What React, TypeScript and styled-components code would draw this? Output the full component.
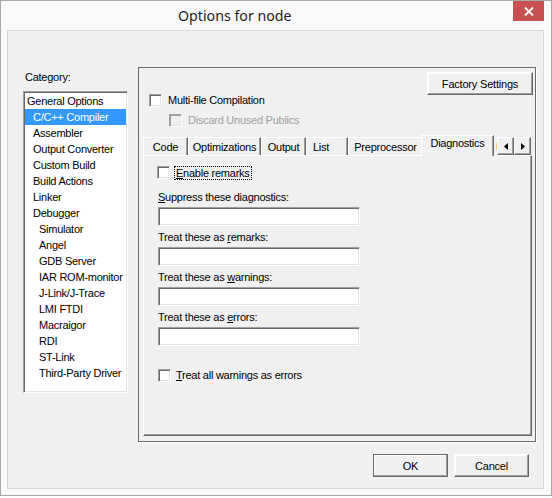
import React from 'react';
import styled, { createGlobalStyle } from 'styled-components';

const GlobalStyle = createGlobalStyle`
  html, body {
    margin: 0;
    padding: 0;
    background: #ffffff;
  }
  body {
    font-family: "Liberation Sans", Arial, sans-serif;
    font-size: 11px;
    letter-spacing: -0.25px;
    color: #000;
  }
`;

const Window = styled.div`
  width: 552px;
  height: 496px;
  box-sizing: border-box;
  border: 1px solid #a9a9a9;
  background: #f9f9f9;
  display: flex;
  flex-direction: column;
`;

const TitleBar = styled.div`
  height: 29px;
  display: flex;
  align-items: flex-start;
  flex-shrink: 0;
`;

const Title = styled.div`
  font-family: "Noto Sans", "Open Sans", sans-serif;
  font-size: 14.2px;
  letter-spacing: 0;
  color: #1e1e1e;
  line-height: 30px;
  padding-left: 177px;
`;

const CloseButton = styled.div`
  margin-left: auto;
  margin-right: 7px;
  width: 31px;
  height: 20px;
  background: #c75050;
  display: flex;
  align-items: center;
  justify-content: center;
`;

const Client = styled.div`
  flex: 1;
  margin: 0 7px 6px 6px;
  border: 1px solid #d6d6d6;
  background: #f0f0f0;
  display: flex;
  flex-direction: column;
`;

const MainRow = styled.div`
  display: flex;
  padding: 36px 0 0 15px;
`;

const LeftColumn = styled.div`
  width: 105px;
  display: flex;
  flex-direction: column;
`;

const CategoryLabel = styled.div`
  margin: 4px 0 7px 2px;
  line-height: 13px;
`;

const ListBox = styled.div`
  width: 105px;
  height: 302px;
  box-sizing: border-box;
  background: #fff;
  border: 1px solid;
  border-color: #a0a0a0 #fff #fff #a0a0a0;
  box-shadow: inset 1px 1px 0 #696969, inset -1px -1px 0 #e3e3e3;
  padding: 1px 1px;
`;

const ListItem = styled.div<{ $level: number; $selected?: boolean }>`
  height: 16px;
  line-height: 16px;
  padding-left: ${p => 2 + p.$level * 6}px;
  white-space: nowrap;
  background: ${p => (p.$selected ? '#3399ff' : 'transparent')};
  color: ${p => (p.$selected ? '#fff' : '#000')};
`;

const Frame = styled.div`
  margin-left: 10px;
  width: 398px;
  height: 375px;
  box-sizing: border-box;
  border: 1px solid #6b6b6b;
  box-shadow: 1px 1px 0 #ffffff;
  display: flex;
  flex-direction: column;
`;

const PushButton = styled.button<{ $w: number; $default?: boolean }>`
  width: ${p => p.$w}px;
  height: 23px;
  box-sizing: border-box;
  padding: 0;
  margin: 0;
  font-family: "Liberation Sans", Arial, sans-serif;
  font-size: 11px;
  letter-spacing: -0.2px;
  color: #000;
  background: #f0f0f0;
  border: 1px solid;
  border-color: ${p => (p.$default ? '#696969' : '#fff #696969 #696969 #fff')};
  box-shadow: inset -1px -1px 0 #a0a0a0, inset 1px 1px 0 #ffffff;
`;

const FactoryButton = styled(PushButton)`
  align-self: flex-end;
  margin: 4px 2px 0 0;
`;

const CheckRow = styled.label<{ $indent: number; $top: number; $gap: number; $disabled?: boolean }>`
  display: flex;
  align-items: center;
  height: 13px;
  margin-left: ${p => p.$indent}px;
  margin-top: ${p => p.$top}px;
  gap: ${p => p.$gap}px;
  color: ${p => (p.$disabled ? '#a0a0a0' : '#000')};
  line-height: 13px;
  white-space: nowrap;
`;

const CheckBox = styled.span<{ $disabled?: boolean }>`
  width: 13px;
  height: 13px;
  box-sizing: border-box;
  flex-shrink: 0;
  background: ${p => (p.$disabled ? '#f0f0f0' : '#fff')};
  border: 1px solid;
  border-color: #a0a0a0 #fff #fff #a0a0a0;
  box-shadow: ${p =>
    p.$disabled
      ? 'inset 1px 1px 0 #a0a0a0, inset -1px -1px 0 #e3e3e3'
      : 'inset 1px 1px 0 #696969, inset -1px -1px 0 #e3e3e3'};
`;

const FocusText = styled.span`
  border: 1px dotted #000;
  padding: 0 1px;
  line-height: 12px;
`;

const U = styled.span`
  text-decoration: underline;
`;

const TabStrip = styled.div`
  display: flex;
  align-items: flex-end;
  height: 20px;
  margin: 8px 0 0 4px;
  position: relative;
  z-index: 1;
`;

const Tab = styled.div<{ $w: number; $selected?: boolean; $indent?: number }>`
  width: ${p => p.$w}px;
  flex-shrink: 0;
  box-sizing: border-box;
  height: ${p => (p.$selected ? 21 : 18)}px;
  margin: ${p => (p.$selected ? '0 -2px -1px -2px' : '0')};
  position: relative;
  z-index: ${p => (p.$selected ? 2 : 1)};
  background: #f0f0f0;
  border-top: 1px solid #fff;
  border-left: 1px solid #fff;
  border-right: 1px solid #696969;
  box-shadow: inset -1px 0 0 #a0a0a0;
  line-height: ${p => (p.$selected ? 15 : 18)}px;
  text-align: ${p => (p.$indent !== undefined ? 'left' : 'center')};
  padding-left: ${p => p.$indent ?? 0}px;
  white-space: nowrap;
  overflow: hidden;
`;

const TabSliver = styled.div`
  width: 5px;
  height: 18px;
  flex-shrink: 0;
  box-sizing: border-box;
  border-top: 1px solid #fff;
  border-left: 1px solid #fff;
  display: flex;
  align-items: center;
  justify-content: flex-end;
  span {
    width: 1px;
    height: 7px;
    background: #f2c96e;
  }
`;

const ArrowButton = styled.div`
  width: 17px;
  height: 18px;
  flex-shrink: 0;
  box-sizing: border-box;
  background: #f0f0f0;
  border: 1px solid;
  border-color: #fff #696969 #696969 #fff;
  box-shadow: inset -1px -1px 0 #a0a0a0;
  display: flex;
  align-items: center;
  justify-content: center;
`;

const TabPage = styled.div`
  flex: 1;
  margin: 0 3px 5px 4px;
  box-sizing: border-box;
  border-top: 1px solid #fff;
  border-left: 1px solid #fff;
  border-right: 1px solid #696969;
  border-bottom: 1px solid #696969;
  box-shadow: inset -1px -1px 0 #a0a0a0;
  padding: 10px 0 0 14px;
  display: flex;
  flex-direction: column;
`;

const FieldGroup = styled.div`
  display: flex;
  flex-direction: column;
  height: 40px;
`;

const FieldLabel = styled.div`
  height: 14px;
  line-height: 14px;
  margin-bottom: 3px;
`;

const TextInput = styled.div`
  width: 202px;
  height: 19px;
  box-sizing: border-box;
  background: #fff;
  border: 1px solid;
  border-color: #a0a0a0 #fff #fff #a0a0a0;
  box-shadow: inset 1px 1px 0 #696969, inset -1px -1px 0 #e3e3e3;
`;

const Fields = styled.div`
  margin-top: 11px;
  display: flex;
  flex-direction: column;
`;

const Footer = styled.div`
  display: flex;
  justify-content: flex-end;
  gap: 6px;
  margin-top: 12px;
  padding-right: 14px;
`;

const categories: { label: string; level: number; selected?: boolean }[] = [
  { label: 'General Options', level: 0 },
  { label: 'C/C++ Compiler', level: 1, selected: true },
  { label: 'Assembler', level: 1 },
  { label: 'Output Converter', level: 1 },
  { label: 'Custom Build', level: 1 },
  { label: 'Build Actions', level: 1 },
  { label: 'Linker', level: 1 },
  { label: 'Debugger', level: 1 },
  { label: 'Simulator', level: 2 },
  { label: 'Angel', level: 2 },
  { label: 'GDB Server', level: 2 },
  { label: 'IAR ROM-monitor', level: 2 },
  { label: 'J-Link/J-Trace', level: 2 },
  { label: 'LMI FTDI', level: 2 },
  { label: 'Macraigor', level: 2 },
  { label: 'RDI', level: 2 },
  { label: 'ST-Link', level: 2 },
  { label: 'Third-Party Driver', level: 2 },
];

const tabs = [
  { label: 'Code', w: 45 },
  { label: 'Optimizations', w: 73 },
  { label: 'Output', w: 45 },
  { label: 'List', w: 42, indent: 6 },
  { label: 'Preprocessor', w: 75 },
  { label: 'Diagnostics', w: 73, selected: true },
];

const Arrow = ({ dir }: { dir: 'left' | 'right' }) => (
  <svg width="4" height="7" viewBox="0 0 4 7">
    {dir === 'left' ? (
      <path d="M4 0 L0 3.5 L4 7 Z" fill="#000" />
    ) : (
      <path d="M0 0 L4 3.5 L0 7 Z" fill="#000" />
    )}
  </svg>
);

const App: React.FC = () => {
  return (
    <>
      <GlobalStyle />
      <Window>
        <TitleBar>
          <Title>Options for node</Title>
          <CloseButton>
            <svg width="10" height="9" viewBox="0 0 10 9">
              <path d="M1 0.5 L9 8.5 M9 0.5 L1 8.5" stroke="#fff" strokeWidth="1.8" />
            </svg>
          </CloseButton>
        </TitleBar>
        <Client>
          <MainRow>
            <LeftColumn>
              <CategoryLabel>Category:</CategoryLabel>
              <ListBox>
                {categories.map(c => (
                  <ListItem key={c.label} $level={c.level} $selected={c.selected}>
                    {c.label}
                  </ListItem>
                ))}
              </ListBox>
            </LeftColumn>
            <Frame>
              <FactoryButton $w={106}>Factory Settings</FactoryButton>
              <CheckRow $indent={10} $top={-1} $gap={6}>
                <CheckBox />
                Multi-file Compilation
              </CheckRow>
              <CheckRow $indent={30} $top={7} $gap={6} $disabled>
                <CheckBox $disabled />
                Discard Unused Publics
              </CheckRow>
              <TabStrip>
                {tabs.map(t => (
                  <Tab key={t.label} $w={t.w} $selected={t.selected} $indent={t.indent}>
                    {t.label}
                  </Tab>
                ))}
                <TabSliver>
                  <span />
                </TabSliver>
                <ArrowButton>
                  <Arrow dir="left" />
                </ArrowButton>
                <ArrowButton>
                  <Arrow dir="right" />
                </ArrowButton>
              </TabStrip>
              <TabPage>
                <CheckRow $indent={-1} $top={0} $gap={4}>
                  <CheckBox />
                  <FocusText>
                    <U>E</U>nable remarks
                  </FocusText>
                </CheckRow>
                <Fields>
                  <FieldGroup>
                    <FieldLabel>
                      <U>S</U>uppress these diagnostics:
                    </FieldLabel>
                    <TextInput />
                  </FieldGroup>
                  <FieldGroup>
                    <FieldLabel>
                      Treat these as <U>r</U>emarks:
                    </FieldLabel>
                    <TextInput />
                  </FieldGroup>
                  <FieldGroup>
                    <FieldLabel>
                      Treat these as <U>w</U>arnings:
                    </FieldLabel>
                    <TextInput />
                  </FieldGroup>
                  <FieldGroup>
                    <FieldLabel>
                      Treat these as <U>e</U>rrors:
                    </FieldLabel>
                    <TextInput />
                  </FieldGroup>
                </Fields>
                <CheckRow $indent={0} $top={19} $gap={5}>
                  <CheckBox />
                  <span>
                    <U>T</U>reat all warnings as errors
                  </span>
                </CheckRow>
              </TabPage>
            </Frame>
          </MainRow>
          <Footer>
            <PushButton $w={75} $default>
              OK
            </PushButton>
            <PushButton $w={75}>Cancel</PushButton>
          </Footer>
        </Client>
      </Window>
    </>
  );
};

export default App;
